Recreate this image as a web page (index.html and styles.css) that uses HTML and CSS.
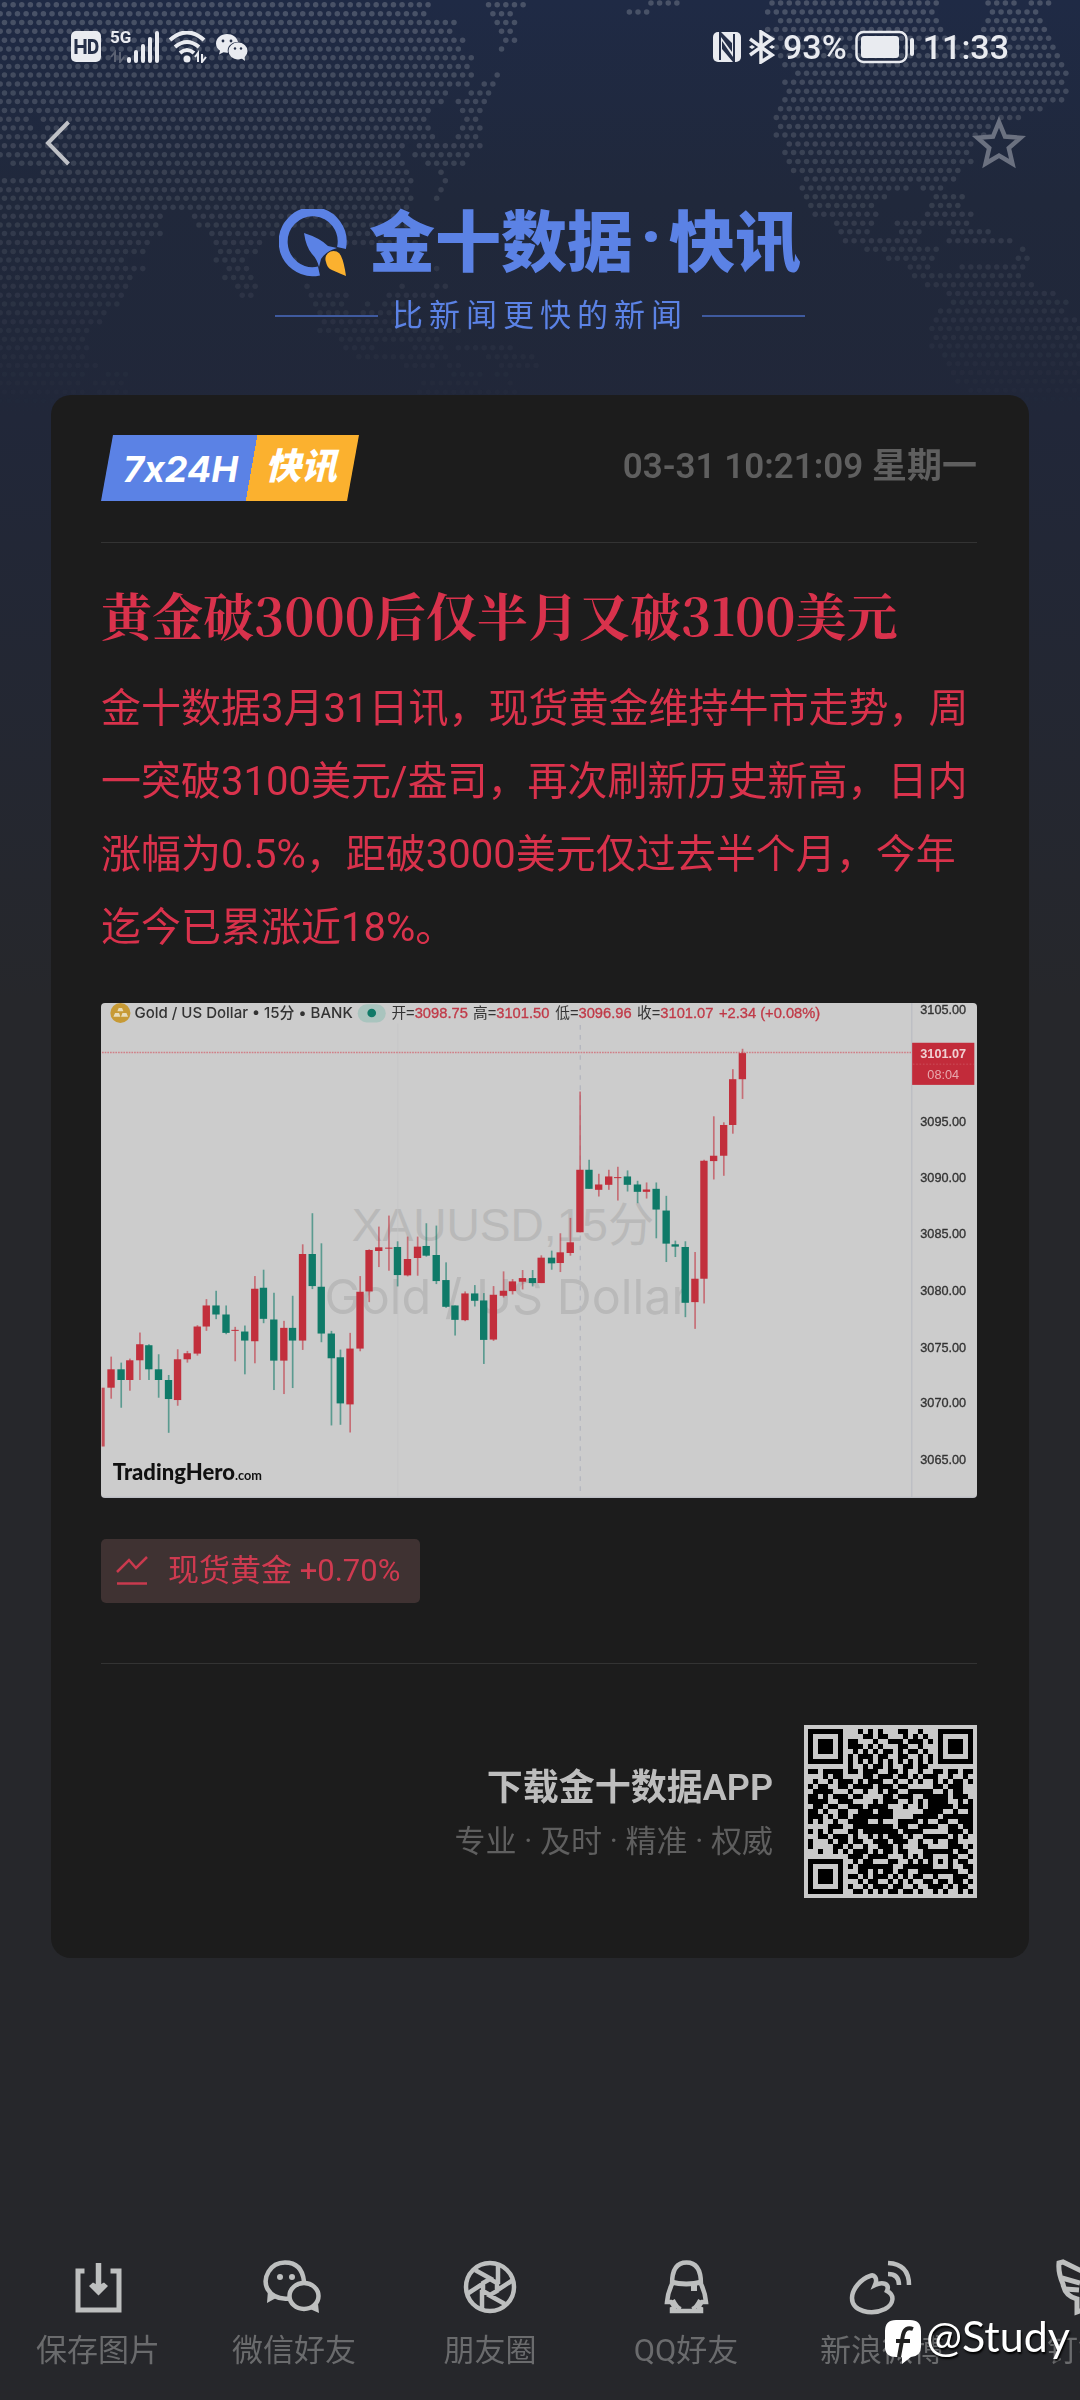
FILE: index.html
```html
<!DOCTYPE html>
<html lang="zh-CN">
<head>
  <meta charset="UTF-8">
  <title>金十数据 · 快讯</title>
  <meta name="viewport" content="width=device-width, initial-scale=1.0">
  <link rel="stylesheet" href="styles.css">
</head>
<body>
  <canvas class="map" id="map" width="1080" height="404" aria-hidden="true"></canvas>

  <!-- status bar -->
  <div class="status">
    <div class="status-side">
      <svg width="30" height="32" viewBox="0 0 30 32"><rect width="30" height="31" rx="5" fill="#e9ebf0"/><path d="M5 8v15M14 8v15M5 15.500h9M18.500 9.500v12h3q4.500 0 4.500-6t-4.500-6z" fill="none" stroke="#263049" stroke-width="3"/></svg>
      <div class="signal">
        <span class="net">5G</span>
        <svg width="50" height="32" viewBox="0 0 50 32"><g fill="#e9ebf0"><rect x="17" y="26" width="4" height="6" rx="2"/><rect x="24" y="19" width="4" height="13" rx="2"/><rect x="31" y="13" width="4" height="19" rx="2"/><rect x="38" y="6" width="4" height="26" rx="2"/><rect x="45" y="0" width="4" height="32" rx="2"/></g><path d="M5 31V21l-4 5M10 21v10l4-5" fill="none" stroke="#5b6273" stroke-width="2"/></svg>
      </div>
      <svg width="38" height="32" viewBox="0 0 38 32"><g fill="none" stroke="#e9ebf0" stroke-width="4"><path d="M1 9q17-15 34 0"/><path d="M6 16q12-10 24 0"/><path d="M11 22q7-6 14 0"/></g><circle cx="18" cy="28" r="3.500" fill="#e9ebf0"/><path d="M29 31v-9l-3 4M33 23v8l4-5" fill="none" stroke="#e9ebf0" stroke-width="2"/></svg>
      <svg width="32" height="28" viewBox="0 0 32 28"><path fill="#e9ebf0" d="M11 1C5 1 0 5 0 10.500c0 3 1.600 5.600 4 7.300L3 21.500l4.500-2.200c1.500.400 3 .500 4.500.400C10.500 14 15 9 22 9 21 4 16.500 1 11 1z"/><ellipse cx="22" cy="18" rx="9.500" ry="8.500" fill="#e9ebf0"/><path d="M25 25l4 3-.500-5z" fill="#e9ebf0"/><g fill="#263049"><circle cx="7" cy="8" r="1.400"/><circle cx="15" cy="8" r="1.400"/><circle cx="19" cy="15.500" r="1.200"/><circle cx="25" cy="15.500" r="1.200"/></g></svg>
    </div>
    <div class="status-side">
      <svg width="28" height="30" viewBox="0 0 28 30"><rect width="28" height="30" rx="5" fill="#e9ebf0"/><path d="M7 0v28M21 2v28" stroke="#263049" stroke-width="2"/><path d="M8 0l11 11v9L8 5zM20 30L9 17v-8l11 16z" fill="#263049"/></svg>
      <svg width="26" height="34" viewBox="0 0 26 34"><path d="M1 9l22 16-11 7V2l11 7L1 25" fill="none" stroke="#e9ebf0" stroke-width="3.500"/><path d="M0 17l3-2 3 2-3 2zM20 17l3-2 3 2-3 2z" fill="#e9ebf0"/></svg>
      <span class="percent">93%</span>
      <svg width="60" height="34" viewBox="0 0 60 34"><rect x="1.500" y="2" width="50" height="30" rx="7" fill="none" stroke="#e9ebf0" stroke-width="2.500"/><rect x="6" y="6" width="38" height="22" rx="3" fill="#e9ebf0"/><rect x="55" y="8" width="4" height="18" rx="2" fill="#e9ebf0"/></svg>
      <span class="clock">11:33</span>
    </div>
  </div>

  <nav class="nav">
    <button class="icon-btn" aria-label="返回"><svg width="26" height="46" viewBox="0 0 26 46"><path d="M23.500 2L3 23l20.500 21" fill="none" stroke="#bfc1c6" stroke-width="4"/></svg></button>
    <button class="icon-btn" aria-label="收藏"><svg width="54" height="54" viewBox="0 0 54 54"><path d="M27 6l6 14.500 15.500 1.300-11.700 10.200 3.600 15.500L27 39.500l-13.400 8 3.600-15.500L5.500 21.800 21 20.500z" fill="none" stroke="#6b7180" stroke-width="4.500"/></svg></button>
  </nav>

  <header class="brand">
    <div class="brand-name">
      <svg width="70" height="70" viewBox="0 0 70 70"><path d="M62.500 39A29.500 30 0 1 0 40 62" fill="none" stroke="#5b82e5" stroke-width="9"/><path d="M25 24Q41 29 49 37L58 39Q47 42 42 50L40 58Q38 50 33 45Q27 38 25 24z" fill="#5b82e5"/><path d="M47 53a8 8 0 0 1 15-6q3 6 5 20-12-5-16-7-3-2-4-7z" fill="#fbb12f"/></svg>
      <h1>金十数据<span class="dot">·</span>快讯</h1>
    </div>
    <p class="slogan">比新闻更快的新闻</p>
  </header>

  <main class="card">
    <div class="card-head">
      <div class="badge"><span class="badge-blue">7x24H</span><span class="badge-gold">快讯</span></div>
      <time class="time">03-31 10:21:09 星期一</time>
    </div>

    <article class="news">
      <h2>黄金破3000后仅半月又破3100美元</h2>
      <p>金十数据3月31日讯，现货黄金维持牛市走势，周一突破3100美元/盎司，再次刷新历史新高，日内涨幅为0.5%，距破3000美元仅过去半个月，今年迄今已累涨近18%。</p>
    </article>

    <svg class="chart" viewBox="37 39 2621 1482" role="img" aria-label="XAUUSD 15分">
      <rect x="37" y="39" width="2621" height="1482" fill="#ccc"/>
      <g class="chart-mark">
        <text x="787" y="750">XAUUSD,15分</text>
        <text class="wide" x="706" y="970">Gold / US Dollar</text>
      </g>
      <path d="M925 100V1515" stroke="#c5c6c8" stroke-width="2"/>
      <path d="M1471 105V1515" stroke="#b4b7bf" stroke-width="4" stroke-dasharray="14 16"/>
      <path d="M40 187H2463" stroke="#d07f87" stroke-width="4" stroke-dasharray="5 3"/>
      <path d="M2463 39V1518M37 1518H2655" stroke="#b6b9c1" stroke-width="3" fill="none"/>
      <g id="candles"></g>
      <circle cx="95" cy="69" r="30" fill="#c79a35"/>
      <path d="M86 64l4-10h10l4 10zM74 80l5-11h12l4 11zM97 80l4-11h12l5 11z" fill="#e8dcba"/>
      <g class="chart-head">
        <text class="pair" x="137" y="85">Gold / US Dollar • 15分 • BANK</text>
        <rect x="805" y="43" width="84" height="54" rx="27" fill="#a9c4be"/>
        <circle cx="847" cy="69" r="13" fill="#0f7a68"/>
        <text x="906" y="85">开=<tspan>3098.75</tspan></text>
        <text x="1150" y="85">高=<tspan>3101.50</tspan></text>
        <text x="1396" y="85">低=<tspan>3096.96</tspan></text>
        <text x="1641" y="85">收=<tspan>3101.07</tspan></text>
        <text x="1886" y="85"><tspan>+2.34 (+0.08%)</tspan></text>
      </g>
      <g class="chart-axis" text-anchor="middle">
        <text x="2557" y="72">3105.00</text>
        <text x="2557" y="407">3095.00</text>
        <text x="2557" y="576">3090.00</text>
        <text x="2557" y="743">3085.00</text>
        <text x="2557" y="912">3080.00</text>
        <text x="2557" y="1082">3075.00</text>
        <text x="2557" y="1247">3070.00</text>
        <text x="2557" y="1417">3065.00</text>
        <rect x="2464" y="158" width="186" height="126" fill="#c22b3a"/>
        <path d="M2466 222H2648" stroke="#d0606a" stroke-width="2" stroke-dasharray="5 5"/>
        <text class="price-now" x="2557" y="203">3101.07</text>
        <text class="price-left" x="2557" y="265">08:04</text>
      </g>
      <text class="chart-logo" x="72" y="1465">TradingHero<tspan>.com</tspan></text>
    </svg>

    <a class="quote" href="#"><svg width="32" height="30" viewBox="0 0 32 30"><path d="M1 16L13 4l7 8L31 1M1 27.500h30" fill="none" stroke="#c93a4e" stroke-width="2.500"/></svg>现货黄金 +0.70%</a>

    <footer class="download">
      <div class="download-text">
        <strong>下载金十数据APP</strong>
        <span>专业 · 及时 · 精准 · 权威</span>
      </div>
      <svg class="qr" viewBox="0 0 173 173" role="img" aria-label="二维码" shape-rendering="crispEdges"><rect width="173" height="173" fill="#c9c9c9"/><path id="qr"/></svg>
    </footer>
  </main>

  <div class="share">
    <button><svg width="60" height="60" viewBox="0 0 60 60"><path d="M16.500 12H10v39h41V12h-8.500" fill="none" stroke="#bdbfbf" stroke-width="5"/><path d="M30.500 4v28" stroke="#bdbfbf" stroke-width="5.500"/><path d="M21 27l4-3.500 5.500 3 5.500-3 4 3.500-9.500 9.500z" fill="#bdbfbf"/></svg>保存图片</button>
    <button><svg width="60" height="60" viewBox="0 0 60 60"><g fill="none" stroke="#bdbfbf" stroke-width="4.500"><path d="M25 39.500Q10 41 3.500 30C-2 19 6 3.500 21 3.500q17 0 19 19"/><ellipse cx="40" cy="37" rx="14.500" ry="13"/></g><path d="M4 31l-1 13 9-5zM46 50l9 4-1-9z" fill="#bdbfbf"/><g fill="#bdbfbf"><circle cx="16" cy="18" r="3"/><circle cx="28" cy="18" r="3"/></g></svg>微信好友</button>
    <button><svg width="60" height="60" viewBox="0 0 60 60"><g fill="none" stroke="#bdbfbf" stroke-width="4.500"><circle cx="30" cy="28" r="24"/><path d="M23 24l7-4 7 4v8l-7 4-7-4zM38 5v20M53 21l-17 11M45 45l-18-10M22 51V31M7 35l17-11M15 11l18 10"/></g></svg>朋友圈</button>
    <button><svg width="60" height="60" viewBox="0 0 60 60"><path d="M16 25q0-21.500 14.500-21.500T45 25q4 8 5 18h-4q-3 3-3 6l2 1v2H16v-2l2-1q0-3-3-6h-4q1-10 5-18z" fill="none" stroke="#bdbfbf" stroke-width="4.500"/><path d="M15 23q15 4 31 0" fill="none" stroke="#bdbfbf" stroke-width="5"/><path d="M35 26h6v6h-6z" fill="#bdbfbf"/><path d="M17 41q4 8 8 9M44 41q-4 8-8 9M15 52h31" fill="none" stroke="#bdbfbf" stroke-width="4"/></svg>QQ好友</button>
    <button><svg width="60" height="60" viewBox="0 0 60 60"><g fill="none" stroke="#bdbfbf" stroke-width="4.500"><path d="M18 17c4-2 8 2 5 9 8-4 15-1 12 6 8 4 7 13-2 18-14 7-33 2-33-11 0-9 9-19 18-22z"/><path d="M36 15q11 0 11 11"/><path d="M36 4q21 1 21 22"/></g></svg>新浪微博</button>
    <button><svg width="60" height="60" viewBox="0 0 60 60"><g fill="none" stroke="#bdbfbf" stroke-width="5"><path d="M29 53v-13q-12-3-14-15Q10 14 11 4l4-1 41 20-10 24z"/><path d="M14 19l18 5M17 30l14 1"/></g></svg>钉钉</button>
  </div>

  <div class="mark">
    <svg width="38" height="46" viewBox="0 0 38 46"><path d="M12 1h14q11 0 11 11v16q0 9-10 10l-9 7V38h-6Q1 38 1 28V12Q1 1 12 1z" fill="#fff"/><path d="M29 10q-8-3-10 6l-4 22M12 22h14" fill="none" stroke="#222" stroke-width="4"/></svg>
    <span>@Study</span>
  </div>

  <script src="script.js"></script>
</body>
</html>
```
FILE: styles.css
```css
:root {
  --blue: #5b82e5;
  --gold: #fbb12f;
  --red: #d9324c;
  --card-bg: #1c1c1c;
  --line: #333;
  --cjk: "Noto Sans CJK SC", sans-serif;
}

* {
  margin: 0;
  padding: 0;
  box-sizing: border-box;
}

body {
  position: relative;
  min-height: 100vh;
  display: flex;
  flex-direction: column;
  font-family: Roboto, var(--cjk);
  background: #26272b linear-gradient(#1f2a45 0, #20283b 200px, #212739 420px, #26272b 1000px) no-repeat;
  color: #fff;
  overflow-x: hidden;
}

svg {
  display: block;
  flex: none;
}

button {
  border: 0;
  background: none;
  font: inherit;
  cursor: pointer;
}

/* dotted world map behind the header */
.map {
  position: absolute;
  top: 0;
  left: 0;
  width: 100%;
  z-index: -1;
}

.status {
  display: flex;
  justify-content: space-between;
  height: 94px;
  padding: 0 71px;
  color: #e9ebf0;
}

.status-side {
  display: flex;
  align-items: center;
  gap: 8px;
}

.status-side:first-child {
  gap: 9px;
}

.signal {
  position: relative;
}

.net {
  position: absolute;
  top: -3px;
  left: 0;
  font-size: 17px;
  line-height: 18px;
  font-weight: 700;
}

.percent,
.clock {
  font-size: 34px;
  font-weight: 500;
}

.nav {
  display: flex;
  justify-content: space-between;
  align-items: center;
  height: 98px;
  padding: 0 54px 0 45px;
}

.icon-btn svg {
  margin: auto;
}

/* brand */
.brand {
  height: 203px;
  padding-top: 12px;
}

.brand-name {
  display: flex;
  justify-content: center;
  align-items: center;
  gap: 20px;
  height: 80px;
}

.brand h1 {
  display: flex;
  font-family: var(--cjk);
  font-size: 66px;
  line-height: 66px;
  height: 80px;
  font-weight: 900;
  color: var(--blue);
}

.brand .dot {
  width: 36px;
  text-align: center;
  font-family: Roboto, sans-serif;
}

.slogan {
  display: flex;
  justify-content: center;
  align-items: center;
  gap: 14px;
  margin-top: 12px;
  font-size: 31px;
  line-height: 40px;
  letter-spacing: 6px;
  color: var(--blue);
}

.slogan::before,
.slogan::after {
  content: '';
  width: 103px;
  height: 2px;
  background: #3f5a9f;
}

/* card */
.card {
  margin: 0 51px;
  padding: 40px 52px 60px 50px;
  background: var(--card-bg);
  border-radius: 20px;
}

.card-head {
  display: flex;
  justify-content: space-between;
  align-items: center;
  padding-bottom: 41px;
  border-bottom: 1px solid var(--line);
}

.badge {
  display: flex;
  height: 66px;
  font-size: 36px;
  line-height: 64px;
  font-weight: 700;
  font-style: italic;
  background: linear-gradient(100deg, var(--blue) 58%, var(--gold) 58%);
  clip-path: polygon(12px 0, 100% 0, calc(100% - 12px) 100%, 0 100%);
}

.badge-blue {
  width: 152px;
  padding-left: 22px;
  font-family: Inter, sans-serif;
  font-variant-ligatures: none;
  line-height: 68px;
}

.badge-gold {
  width: 106px;
  padding-left: 12px;
  font-weight: 900;
}

.time {
  height: 50px;
  font-size: 35px;
  line-height: 48px;
  font-weight: 600;
  color: #5f5f5f;
}

.news {
  color: var(--red);
}

.news h2 {
  padding-top: 35px;
  font-family: "Noto Serif CJK SC", "Liberation Serif", "Noto Sans CJK SC", serif;
  font-size: 51px;
  line-height: 72px;
  font-weight: 700;
}

.news p {
  margin-top: 22px;
  font-size: 40px;
  line-height: 73px;
}

/* candle chart */
.chart {
  width: 100%;
  margin-top: 39px;
  border-radius: 4px;
  font-family: "Liberation Sans", var(--cjk);
}

.chart-mark {
  font-size: 138px;
  fill: #b9b9b9;
}

.chart-mark .wide {
  font-family: Inter, sans-serif;
  font-size: 145px;
}

.chart-head {
  font-size: 44px;
  fill: #333;
}

.chart-head .pair {
  font-family: Inter, var(--cjk);
  font-size: 45px;
  font-weight: 500;
}

.chart-head tspan {
  fill: #c03a48;
  stroke: #c03a48;
  stroke-width: 1px;
}

.chart-axis {
  font-size: 38px;
  fill: #333;
  stroke: #333;
  stroke-width: 1px;
}

.chart-axis .price-now {
  font-weight: 700;
  fill: #f0d0d2;
  stroke: none;
}

.chart-axis .price-left {
  fill: #e8a9ae;
  stroke: none;
}

.chart-axis rect {
  stroke: none;
}

.chart-logo {
  font-family: Lato, sans-serif;
  font-size: 66px;
  font-weight: 900;
  fill: #111;
}

.chart-logo tspan {
  font-size: 38px;
  font-weight: 700;
}

.up {
  fill: #c22f3c;
}

.down {
  fill: #0f7a68;
}

.quote {
  display: inline-flex;
  align-items: center;
  gap: 20px;
  height: 64px;
  margin-top: 41px;
  padding: 0 20px 0 15px;
  border-radius: 5px;
  background: #3f3232;
  color: #cf3a50;
  font-size: 31px;
  line-height: 60px;
  text-decoration: none;
}

.download {
  display: flex;
  justify-content: flex-end;
  align-items: center;
  gap: 31px;
  margin-top: 60px;
  padding-top: 61px;
  border-top: 1px solid var(--line);
}

.download-text {
  display: flex;
  flex-direction: column;
  gap: 9px;
  padding-top: 6px;
  text-align: right;
}

.download-text strong {
  font-size: 36px;
  line-height: 46px;
  font-weight: 600;
  color: #bdbdbd;
}

.download-text span {
  font-size: 31px;
  line-height: 44px;
  color: #5f5f5f;
}

.qr {
  width: 173px;
}

/* share bar */
.share {
  display: flex;
  margin-top: auto;
  padding-bottom: 27px;
  overflow: hidden;
}

.share button {
  flex: none;
  display: flex;
  flex-direction: column;
  align-items: center;
  gap: 10px;
  width: 196px;
  font-size: 31px;
  line-height: 44px;
  color: #6a6b6d;
}

.share svg {
  overflow: visible;
}

.mark {
  position: absolute;
  right: 10px;
  bottom: 35px;
  display: flex;
  align-items: flex-start;
  gap: 4px;
  font-family: Lato, sans-serif;
  font-size: 43px;
  line-height: 34px;
  text-shadow: 1px 2px 2px #000;
}
```
FILE: script.js
```js
// ---- dotted map: [y, x1, x2, x1, x2, ...] per row, in map units ----
const mapLeft = [
  [14, 0, 1255, 1410, 1530], [40, 0, 1240, 1425, 1490], [65, 0, 1325, 1435, 1505], [91, 0, 1310, 1450, 1490],
  [117, 0, 1350, 1460, 1505], [142, 0, 1340, 1445, 1465], [168, 0, 1375], [193, 0, 1365], [218, 0, 1375, 1430, 1450],
  [244, 0, 1360, 1395, 1440], [270, 0, 1300, 1360, 1425], [295, 0, 1290, 1325, 1415], [321, 0, 1250, 1335, 1400],
  [346, 0, 85, 120, 1245, 1345, 1390], [372, 0, 98, 130, 1255, 1335, 1400], [397, 0, 1265, 1325, 1390],
  [423, 0, 1180, 1210, 1405], [449, 0, 1175, 1200, 1360], [474, 35, 1180, 1235, 1350], [500, 120, 1190, 1270, 1290],
  [525, 0, 1200, 1285, 1305], [551, 0, 1195, 1270, 1290], [576, 0, 1205, 1260, 1275], [602, 0, 1195],
  [628, 0, 475, 560, 1180], [653, 0, 465, 575, 1190], [678, 0, 475, 610, 790, 1000, 1190], [704, 0, 440, 620, 760, 1000, 1210],
  [730, 0, 415, 635, 745], [755, 0, 365, 620, 710, 850, 860], [780, 0, 430, 655, 725, 1180, 1280], [806, 0, 385, 645, 745],
  [831, 0, 370, 685, 750, 880, 900, 1160, 1180, 1255, 1300], [857, 0, 365, 695, 740, 900, 1015, 1125, 1260],
  [883, 0, 350, 910, 1010, 1060, 1080, 1110, 1195, 1260, 1300], [908, 0, 315, 925, 1005, 1050, 1225],
  [934, 0, 300, 925, 1025, 1045, 1200], [960, 0, 258, 920, 965, 975, 1350], [985, 0, 250, 985, 1100, 1120, 1280],
  [1010, 0, 255, 1000, 1100, 1200, 1300, 1330, 1480], [1036, 0, 250, 1035, 1300, 1410, 1560],
  [1061, 0, 290, 1175, 1265, 1300, 1340, 1450, 1560], [1087, 0, 240, 310, 375, 1310, 1400, 1430, 1480],
  [1112, 0, 240, 275, 365, 1225, 1380, 1470, 1500], [1138, 0, 240, 285, 375, 1210, 1510], [1164, 0, 200, 1175, 1490]
];
const mapRight = [
  [9, 320, 410, 670, 1160, 1295, 1390, 1420, 1490], [35, 250, 320, 655, 1150, 1305, 1445], [60, 695, 1160, 1295, 1460],
  [86, 655, 1170, 1285, 1475], [111, 670, 1200, 1270, 1485], [137, 690, 1490], [162, 700, 1510], [188, 700, 1520],
  [213, 745, 1535], [239, 705, 1525], [265, 715, 1535], [290, 705, 1525], [316, 690, 1460], [341, 680, 1400],
  [367, 690, 1305], [392, 680, 1295], [418, 715, 1265], [443, 705, 1250], [469, 715, 1260], [495, 730, 1225],
  [520, 770, 1210], [546, 755, 1075, 1105, 1170], [571, 770, 1010, 1145, 1235], [597, 780, 970, 1130, 1220],
  [622, 795, 985, 1120, 1260], [648, 855, 975, 1030, 1250], [673, 870, 960, 1040, 1110, 1190, 1305],
  [699, 880, 1100, 1180, 1370], [724, 940, 1160, 1390, 1410], [750, 1005, 1150, 1380, 1420], [775, 1065, 1135, 1215, 1410],
  [801, 1080, 1400], [827, 1115, 1430], [852, 1180, 1500], [878, 1190, 1535], [903, 1155, 1530], [929, 1145, 1568],
  [954, 1140, 1568], [980, 1130, 1568], [1005, 1130, 1568], [1031, 1165, 1568], [1056, 1180, 1568], [1082, 1190, 1568],
  [1107, 1205, 1568], [1133, 1240, 1568], [1158, 1255, 1568]
];

function drawMap(rows, left, start) {
  const ctx = document.getElementById("map").getContext("2d");
  ctx.save();
  ctx.scale(1080 / 3136, 1080 / 3136);
  ctx.translate(left, 0);
  rows.forEach((row, i) => {
    const y = row[0];
    ctx.fillStyle = `rgba(190, 195, 200, ${0.27 * (1 - y / 1200)})`;
    const first = i % 2 ? start - 12.5 : start;
    for (let x = first; x < 1568; x += 25.1) {
      for (let k = 1; k < row.length; k += 2) {
        if (x >= row[k] - 4 && x <= row[k + 1] + 4) {
          ctx.beginPath();
          ctx.arc(x, y, 8, 0, Math.PI * 2);
          ctx.fill();
        }
      }
    }
  });
  ctx.restore();
}
drawMap(mapLeft, 0, 13);
drawMap(mapRight, 1568, 21);

// ---- candles: x, high, body top, body bottom, low, up? ----
const candles = [
  [67, 1097, 1135, 1190, 1223, 1], [97, 1115, 1135, 1167, 1250, 0], [123, 1103, 1108, 1167, 1199, 1],
  [153, 1025, 1060, 1108, 1167, 1], [180, 1060, 1063, 1135, 1167, 0], [209, 1090, 1135, 1167, 1220, 0],
  [239, 1152, 1167, 1224, 1325, 0], [266, 1075, 1105, 1227, 1244, 1], [295, 1080, 1087, 1105, 1115, 1],
  [325, 1003, 1007, 1088, 1094, 1], [352, 925, 944, 1007, 1020, 1], [381, 900, 944, 971, 985, 0],
  [411, 944, 971, 1026, 1030, 0], [438, 1008, 1017, 1020, 1111, 1], [467, 1004, 1022, 1049, 1150, 0],
  [497, 856, 894, 1051, 1117, 1], [523, 837, 891, 984, 997, 0], [554, 906, 986, 1109, 1197, 0],
  [584, 990, 1011, 1109, 1209, 1], [610, 915, 1011, 1049, 1191, 0], [640, 761, 790, 1049, 1077, 1],
  [669, 668, 790, 886, 895, 0], [696, 758, 888, 1028, 1054, 0], [726, 1020, 1028, 1102, 1303, 0],
  [753, 1076, 1099, 1237, 1301, 0], [782, 1026, 1073, 1240, 1324, 1], [812, 856, 903, 1073, 1081, 1],
  [839, 776, 778, 902, 934, 1], [868, 708, 770, 781, 829, 1], [898, 675, 771, 774, 840, 1],
  [924, 752, 769, 853, 887, 0], [954, 738, 805, 854, 857, 1], [984, 738, 768, 802, 855, 1],
  [1010, 698, 766, 795, 798, 0], [1040, 705, 793, 871, 880, 0], [1069, 815, 868, 948, 951, 0],
  [1096, 944, 944, 987, 1034, 0], [1126, 902, 908, 988, 991, 1], [1155, 883, 908, 930, 947, 0],
  [1182, 907, 929, 1047, 1119, 0], [1211, 886, 912, 1046, 1050, 1], [1241, 842, 900, 915, 920, 1],
  [1268, 865, 872, 901, 911, 1], [1298, 838, 862, 873, 896, 1], [1328, 838, 862, 877, 887, 0],
  [1354, 794, 801, 877, 877, 1], [1385, 780, 801, 818, 837, 0], [1411, 728, 785, 817, 844, 1],
  [1441, 682, 755, 787, 795, 1], [1470, 304, 538, 725, 725, 1], [1497, 508, 538, 595, 595, 0],
  [1526, 550, 582, 598, 618, 1], [1556, 538, 558, 583, 598, 1], [1583, 529, 560, 563, 630, 1],
  [1612, 540, 558, 583, 603, 0], [1642, 571, 582, 604, 638, 0], [1669, 576, 597, 604, 624, 1],
  [1698, 576, 595, 657, 743, 0], [1728, 616, 660, 759, 814, 0], [1755, 750, 761, 768, 799, 0],
  [1785, 752, 769, 936, 979, 0], [1814, 784, 864, 934, 1014, 1], [1841, 508, 511, 864, 938, 1],
  [1870, 378, 496, 512, 567, 1], [1900, 396, 404, 496, 556, 1], [1927, 237, 267, 404, 430, 1],
  [1956, 176, 189, 267, 326, 1]
];

let bars = '<rect class="up" x="39" y="1190" width="9" height="176" opacity="0.8"/>';
candles.forEach(([x, high, top, bottom, low, up]) => {
  const cls = up ? "up" : "down";
  bars += `<rect class="${cls}" opacity="0.6" x="${x - 2}" y="${high}" width="5" height="${low - high}"/>`;
  bars += `<rect class="${cls}" x="${x - 11}" y="${top}" width="22" height="${bottom - top}"/>`;
});
document.getElementById("candles").innerHTML = bars;

// ---- qr code, 33 x 33 modules ----
const qr = [
  "111111100010101000110010001111111",
  "100000100001101100010101001000001",
  "101110101100010011101110101011101",
  "101110101110101000110010001011101",
  "101110100101010110101101001011101",
  "100000101011101100110010101000001",
  "111111101010101010101010101111111",
  "000000001001011010011011000000000",
  "110111101101110011010010011011011",
  "000101100001101110110101110010010",
  "010010111010111001001010010101101",
  "101100110111101110110000011011100",
  "011110001001001011001111100101100",
  "110101110110000110111001111101110",
  "111100111000010111001010111100101",
  "011011001110111100010010111110111",
  "110100110011101110000001111001001",
  "111010110111111110000111110111111",
  "101001001111001000111101001100111",
  "000011100111111110110011110011011",
  "101010001101111111011110000011101",
  "001101110100101011101001111101010",
  "100010110110011101110010010011000",
  "100001101001001110100011000011101",
  "001001010111010110110001111110110",
  "000000001110111100010101100011001",
  "111111100101100011001010101010110",
  "100000101011111110011111100010011",
  "101110100011010110110011111111001",
  "101110101101011101010110010001110",
  "101110100010110010101001101101101",
  "100000101001011101100100111010110",
  "111111100110101011011010010100101"
];
let d = "";
qr.forEach((row, y) => {
  [...row].forEach((bit, x) => {
    if (bit === "1") d += `M${4 + x * 5} ${4 + y * 5}h5v5h-5z`;
  });
});
document.getElementById("qr").setAttribute("d", d);
```
